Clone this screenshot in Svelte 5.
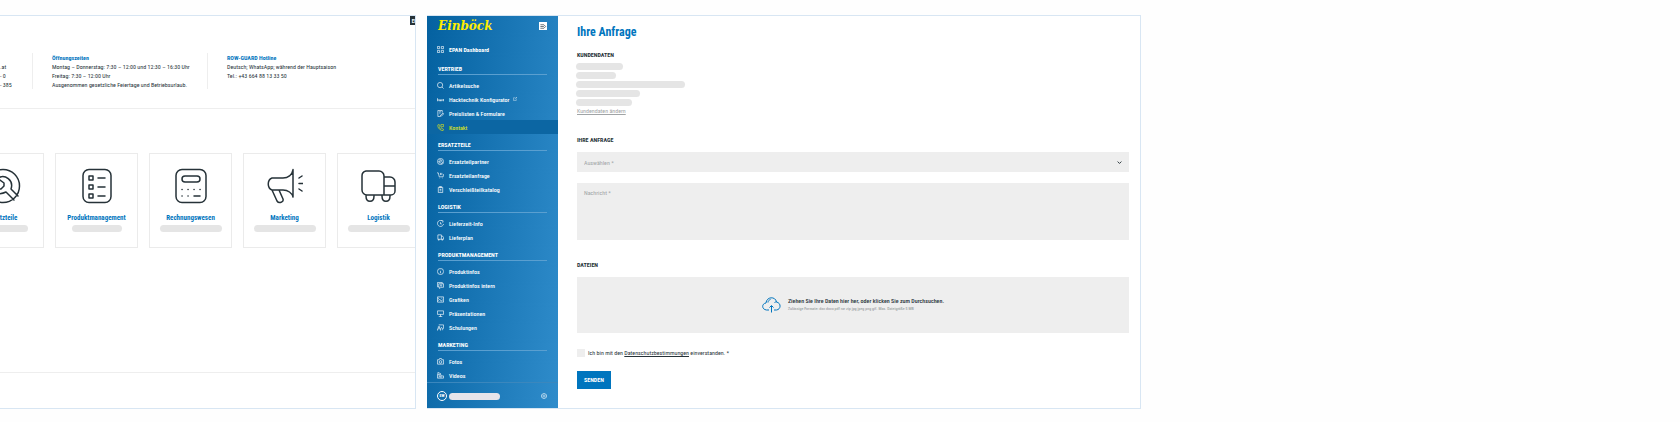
<script>
  const contact = [
    { title: '', lines: ['.at', '- 0', '- 385'] },
    {
      title: 'Öffnungszeiten',
      lines: [
        'Montag – Donnerstag: 7:30 – 12:00 und 12:30 – 16:30 Uhr',
        'Freitag: 7:30 – 12:00 Uhr',
        'Ausgenommen gesetzliche Feiertage und Betriebsurlaub.',
      ],
    },
    {
      title: 'ROW-GUARD Hotline',
      lines: ['Deutsch; WhatsApp; während der Hauptsaison', 'Tel.: +43 664 88 13 33 50'],
    },
  ];

  const departments = [
    {
      name: 'Ersatzteile',
      bar: 50,
      icon: 'M18 1.500a16.500 16.500 0 1 0 0 33a16.500 16.500 0 1 0 0-33z M15 12l4 3v3l-3 3h-4 M13 10c7-4 16 2 13 11l7 7 M10 25c3 1 7 1 11-1l8 8',
    },
    {
      name: 'Produktmanagement',
      bar: 50,
      icon: 'M10 1.500h16a6 6 0 0 1 6 6v21a6 6 0 0 1-6 6H10a6 6 0 0 1-6-6v-21a6 6 0 0 1 6-6z M10 8h4v4h-4z M10 17h4v4h-4z M10 26h4v4h-4z M19 10h7 M19 19h7 M19 28h7',
    },
    {
      name: 'Rechnungswesen',
      bar: 62,
      icon: 'M9 1.500h18a6 6 0 0 1 6 6v21a6 6 0 0 1-6 6H9a6 6 0 0 1-6-6v-21a6 6 0 0 1 6-6z M12 8h12a3 3 0 0 1 0 6H12a3 3 0 0 1 0-6z M9 21.500h.1 M15 21.500h.1 M21 21.500h.1 M27 21.500h.1 M9 28h.1 M15 28h.1 M21 28h6',
    },
    {
      name: 'Marketing',
      bar: 62,
      icon: 'M26 1.500v27 M26 2c-1 5-5 8-10 8H5c-5 2-5 10 0 12h11c5 0 9 3 10 7 M5 22l5 11c2 3 7 1 6-2l-4-9 M32 10l3-2 M32 15.500h4 M32 21l3 2',
    },
    {
      name: 'Logistik',
      bar: 62,
      icon: 'M5 3h13a5 5 0 0 1 5 5v19H6a5 5 0 0 1-5-5V8a5 5 0 0 1 4-5z M23 9h6a5 5 0 0 1 5 5v9a4 4 0 0 1-4 4h-7 M23 18h11 M5 28c0 7 8 7 8 0 M21 28c0 7 8 7 8 0',
    },
  ];

  const menu = [
    {
      title: 'Vertrieb',
      items: [
        { label: 'Artikelsuche', icon: 'M7 1a6 6 0 1 0 0 12a6 6 0 1 0 0-12z M11.500 11.500L15 15' },
        { label: 'Hacktechnik Konfigurator', external: true, icon: 'M1 5v7 M1 9h14 M5 9v3 M8 9v3 M11 9v3 M15 7v5' },
        { label: 'Preislisten & Formulare', icon: 'M12 6V1H2v14h6 M5 4h4 M5 7h3 M8 12l6-5l1 2l-5 5H8z' },
        {
          label: 'Kontakt',
          active: true,
          icon: 'M2 2l3-1l2 4l-2 2c1 3 2 4 4 5l2-2l4 2l-1 3C7 15 1 9 2 2z M9 1h6v5h-3l-2 2V6H9z',
        },
      ],
    },
    {
      title: 'Ersatzteile',
      items: [
        { label: 'Ersatzteilpartner', icon: 'M8 1a7 7 0 1 0 0 14a7 7 0 1 0 0-14z M6 4c4-1 6 2 5 5l3 3 M4 7c0 4 3 5 5 4l2 3 M6 4l2 3l-2 2l-2-2' },
        { label: 'Ersatzteilanfrage', icon: 'M0 2h3l2 9h9l1-6 M8 2v5 M11 2v5 M6 14h1 M12 14h1' },
        { label: 'Verschleißteilkatalog', icon: 'M3 3h10v12H3z M6 1h4v3H6z M6 8h4 M6 11h4' },
      ],
    },
    {
      title: 'Logistik',
      items: [
        { label: 'Lieferzeit-Info', icon: 'M12 2a7 7 0 1 0 3 7 M10 1l4 1l-1 4 M8 5v4h3' },
        { label: 'Lieferplan', icon: 'M2 2h8v10H2z M10 5h3l2 3v4h-5 M3 12v2h2v-2 M11 12v2h2v-2' },
      ],
    },
    {
      title: 'Produktmanagement',
      items: [
        { label: 'Produktinfos', icon: 'M8 1a7 7 0 1 0 0 14a7 7 0 1 0 0-14z M8 4v1 M8 7v5' },
        { label: 'Produktinfos intern', icon: 'M4 11H1V1h11v3 M4 4h11v8H9l-3 3v-3H4z M7 7h5 M7 9h4' },
        { label: 'Grafiken', icon: 'M1 2h14v12H1z M1 12l5-5l4 5l3-4 M10 5h2 M3 4v3' },
        { label: 'Präsentationen', icon: 'M1 2h14v8H1z M8 10v5 M4 15h8' },
        { label: 'Schulungen', icon: 'M4 2h11v8h-4 M3 6h3v3H3z M1 15v-4h7l3-4 M8 11v4 M11 13h3' },
      ],
    },
    {
      title: 'Marketing',
      items: [
        { label: 'Fotos', icon: 'M1 4h4l1-3h4l1 3h4v10H1z M8 6a3 3 0 1 0 0 6a3 3 0 1 0 0-6z' },
        { label: 'Videos', icon: 'M1 6h8v8H1z M9 9h6v5H9 M2 1l7 3 M5 8v4l2-2z M2 1v5' },
      ],
    },
  ];

  const customer = [47, 40, 109, 64, 56];

  let message = $state('');
  let accepted = $state(false);
</script>

{#snippet icon(d)}
  <svg class="icon" viewBox="0 0 16 16" aria-hidden="true"><path {d} /></svg>
{/snippet}

<div class="board">
  <section class="panel contact">
    <button class="lang">EN</button>
    <div class="infos">
      {#each contact as block}
        <div class="info">
          <h3>{block.title}</h3>
          {#each block.lines as line}
            <p>{line}</p>
          {/each}
        </div>
      {/each}
    </div>
    <div class="cards">
      {#each departments as dep}
        <a class="card" href="#{dep.name}">
          <svg viewBox="0 0 36 36" aria-hidden="true"><path d={dep.icon} /></svg>
          <strong>{dep.name}</strong>
          <span class="bar" style="width: {dep.bar}px"></span>
        </a>
      {/each}
    </div>
    <footer></footer>
  </section>

  <section class="panel request">
    <aside>
      <header>
        <span class="logo">Einböck</span>
        <button class="toggle" aria-label="Menü">
          <svg class="icon" viewBox="0 0 16 16" aria-hidden="true"><path d="M2 4h8 M2 8h8 M2 12h8 M10 4l4 4l-4 4" /></svg>
        </button>
      </header>
      <nav>
        <a class="item dashboard" href="#dashboard">
          {@render icon('M1 1h5v5H1z M10 1h5v5h-5z M1 10h5v5H1z M10 10h5v5h-5z')}
          EPAN Dashboard
        </a>
        {#each menu as group}
          <h4>{group.title}</h4>
          {#each group.items as item}
            <a class="item" class:active={item.active} href="#{item.label}">
              {@render icon(item.icon)}
              {item.label}
              {#if item.external}
                <span class="external">{@render icon('M8 3H2v11h11V8 M10 1h5v5 M15 1L7 9')}</span>
              {/if}
            </a>
          {/each}
        {/each}
      </nav>
      <div class="user">
        <span class="avatar">EW</span>
        <span class="name"></span>
        <button class="settings" aria-label="Einstellungen">
          {@render icon('M6 1h4l1 2l3 1l1 4l-1 4l-3 1l-1 2H6l-1-2l-3-1l-1-4l1-4l3-1z M8 5a3 3 0 1 0 0 6a3 3 0 1 0 0-6z')}
        </button>
      </div>
    </aside>

    <form onsubmit={(e) => e.preventDefault()}>
      <h1>Ihre Anfrage</h1>

      <h2>Kundendaten</h2>
      <div class="customer">
        {#each customer as width}
          <span class="bar" style="width: {width}px"></span>
        {/each}
      </div>
      <a class="change" href="#kundendaten">Kundendaten ändern</a>

      <h2 class="spaced">Ihre Anfrage</h2>
      <div class="select">
        <select aria-label="Auswählen">
          <option>Auswählen *</option>
        </select>
        <svg class="icon" viewBox="0 0 16 16" aria-hidden="true"><path d="M2 5l6 6l6-6" /></svg>
      </div>
      <textarea aria-label="Nachricht" placeholder="Nachricht *" bind:value={message}></textarea>

      <h2 class="spaced">Dateien</h2>
      <label class="drop">
        <input type="file" multiple />
        <svg viewBox="0 0 38 32" aria-hidden="true">
          <path d="M14 26H9C-1 25-1 13 8 12C9-1 27-2 29 10c10 2 9 15 0 16h-5 M12 11c0-3 2-5 5-6 M29 10c-2 0-3 0-4 1 M19 31V18 M15 21l4-4l4 4" />
        </svg>
        <span>
          <b>Ziehen Sie Ihre Daten hier her, oder klicken Sie zum Durchsuchen.</b>
          <small>Zulässige Formate: doc docx pdf rar zip jpg jpeg png gif. Max. Dateigröße 5 MB</small>
        </span>
      </label>

      <div class="accept">
        <input id="accept" type="checkbox" bind:checked={accepted} />
        <label for="accept">Ich bin mit den <a href="#datenschutz">Datenschutzbestimmungen</a> einverstanden. *</label>
      </div>
      <button class="send">Senden</button>
    </form>
  </section>
</div>

<style>
  :global(body) {
    background: #fefefe;
  }

  .board {
    display: grid;
    grid-template-columns: 416fr 714fr 528fr;
    gap: 11px;
    padding: 15px 0;
    font: 400 6px/9px "Liberation Sans Narrow", "Roboto Condensed", sans-serif;
    color: #263238;
  }

  .board * {
    box-sizing: border-box;
  }

  h1, h2, h3, h4, p {
    margin: 0;
  }

  a {
    color: inherit;
    text-decoration: none;
  }

  button {
    padding: 0;
    border: none;
    font: inherit;
  }

  .icon {
    display: block;
    width: 7px;
    height: 7px;
    flex: none;
    fill: none;
    stroke: currentColor;
    stroke-width: 1.5;
  }

  .panel {
    border: 1px solid #d8e6f3;
    background: #fff;
    overflow: hidden;
  }

  .bar {
    display: block;
    height: 7px;
    border-radius: 4px;
    background: #e5e5e5;
  }

  /* contact overview */
  .contact {
    position: relative;
    display: flex;
    flex-direction: column;
    border-left: none;
  }

  .lang {
    position: absolute;
    top: 0;
    right: -4px;
    width: 9px;
    height: 9px;
    background: #263238;
    color: #fff;
    font-size: 5px;
    font-weight: 700;
    line-height: 8px;
  }

  .infos {
    display: grid;
    grid-template-columns: 32px 175px 1fr;
    padding: 37px 0 19px;
    border-bottom: 1px solid #eee;
  }

  .info {
    height: 36px;
    white-space: nowrap;
  }

  .info + .info {
    padding-left: 19px;
    border-left: 1px solid #eee;
  }

  .info h3 {
    height: 9px;
    font-size: 6px;
    font-weight: 700;
    color: #0075be;
  }

  .cards {
    display: flex;
    gap: 11px;
    margin: 44px 0 0 -39px;
  }

  .card {
    flex: none;
    display: flex;
    flex-direction: column;
    align-items: center;
    width: 83px;
    height: 95px;
    padding-top: 14px;
    border: 1px solid #ebebeb;
  }

  .card svg {
    width: 36px;
    height: 36px;
    fill: none;
    stroke: #263238;
    stroke-width: 1.5;
    stroke-linecap: round;
    stroke-linejoin: round;
  }

  .card strong {
    margin: 10px 0 2px;
    font-size: 7px;
    font-weight: 700;
    color: #0075be;
  }

  .contact footer {
    height: 36px;
    margin-top: auto;
    border-top: 1px solid #eee;
  }

  /* sidebar */
  .request {
    display: grid;
    grid-template-columns: 131px 1fr;
    border-left: none;
  }

  aside {
    display: flex;
    flex-direction: column;
    margin: -1px 0;
    background: linear-gradient(96deg, #0461a0, #2f8ccb);
    color: #fff;
  }

  header {
    display: flex;
    align-items: center;
    justify-content: space-between;
    height: 22px;
    padding: 0 11px;
  }

  .logo {
    font: italic 700 12px/16px "DejaVu Serif", serif;
    color: #ffed00;
  }

  .toggle {
    width: 8px;
    height: 8px;
    background: #fff;
    color: #263238;
  }

  .toggle .icon {
    width: 8px;
  }

  nav {
    padding-top: 5px;
  }

  .item {
    display: flex;
    align-items: center;
    gap: 5px;
    height: 14px;
    padding: 0 10px;
    font-weight: 500;
  }

  .item.dashboard {
    font-weight: 700;
  }

  .item.active {
    background: #0c66a3;
    color: #d6e021;
  }

  .external .icon {
    width: 4px;
    height: 4px;
    margin-left: -2px;
  }

  h4 {
    margin: 6px 11px 3px;
    border-bottom: 1px solid #5a9fd0;
    font: 700 6px/10px "Roboto Condensed", "Liberation Sans Narrow", sans-serif;
    text-transform: uppercase;
  }

  .dashboard + h4 {
    margin-top: 8px;
  }

  .user {
    display: flex;
    align-items: center;
    gap: 2px;
    height: 27px;
    margin-top: auto;
    padding: 0 11px 0 10px;
    border-top: 1px solid #3b87bd;
  }

  .avatar {
    width: 10px;
    height: 10px;
    border: 1px solid #fff;
    border-radius: 50%;
    font-size: 4px;
    font-weight: 700;
    line-height: 8px;
    text-align: center;
  }

  .name {
    width: 51px;
    height: 7px;
    border-radius: 4px;
    background: #e6e4ea;
  }

  .settings {
    margin-left: auto;
    background: none;
    color: #fff;
  }

  .settings .icon {
    width: 6px;
    height: 6px;
  }

  /* request form */
  form {
    display: flex;
    flex-direction: column;
    padding: 9px 11px 17px 19px;
  }

  h1 {
    font: 700 12px/14px "Roboto Condensed", "Liberation Sans Narrow", sans-serif;
    color: #0075be;
  }

  h2 {
    margin-top: 11px;
    font: 700 6px/10px "Roboto Condensed", "Liberation Sans Narrow", sans-serif;
    text-transform: uppercase;
  }

  h2.spaced {
    margin-top: 20px;
  }

  .customer {
    display: grid;
    gap: 2px;
    margin: 3px 0 0 -1px;
  }

  .change {
    align-self: flex-start;
    color: #a0a4a6;
    text-decoration: underline;
  }

  .select {
    position: relative;
    margin-top: 7px;
  }

  .select .icon {
    position: absolute;
    top: 8px;
    right: 7px;
    width: 5px;
    height: 5px;
    stroke-width: 3;
  }

  select,
  textarea {
    display: block;
    width: 100%;
    margin: 0;
    padding: 5px 7px;
    border: none;
    border-radius: 0;
    background: #eee;
    font: inherit;
    color: #a0a4a6;
    appearance: none;
    resize: none;
  }

  select {
    height: 20px;
  }

  textarea {
    height: 57px;
    margin-top: 11px;
  }

  textarea::placeholder {
    color: #a0a4a6;
  }

  .drop {
    display: flex;
    align-items: center;
    justify-content: center;
    gap: 7px;
    height: 56px;
    margin-top: 7px;
    background: #eee;
  }

  .drop input {
    display: none;
  }

  .drop svg {
    width: 19px;
    height: 16px;
    fill: none;
    stroke: #0075be;
    stroke-width: 2;
  }

  .drop b,
  .drop small {
    display: block;
    font-weight: 500;
    line-height: 8px;
  }

  .drop small {
    font-size: 4px;
    color: #a0a4a6;
  }

  .accept {
    display: flex;
    align-items: center;
    gap: 3px;
    margin-top: 15px;
  }

  .accept input {
    width: 8px;
    height: 8px;
    margin: 0;
    background: #eee;
    appearance: none;
  }

  .accept input:checked {
    background: #0075be;
  }

  .accept a {
    text-decoration: underline;
  }

  .send {
    align-self: flex-start;
    height: 18px;
    margin-top: 14px;
    padding: 0 7px;
    background: #0075be;
    color: #fff;
    font: 700 6px/18px "Roboto Condensed", "Liberation Sans Narrow", sans-serif;
    text-transform: uppercase;
  }
</style>
